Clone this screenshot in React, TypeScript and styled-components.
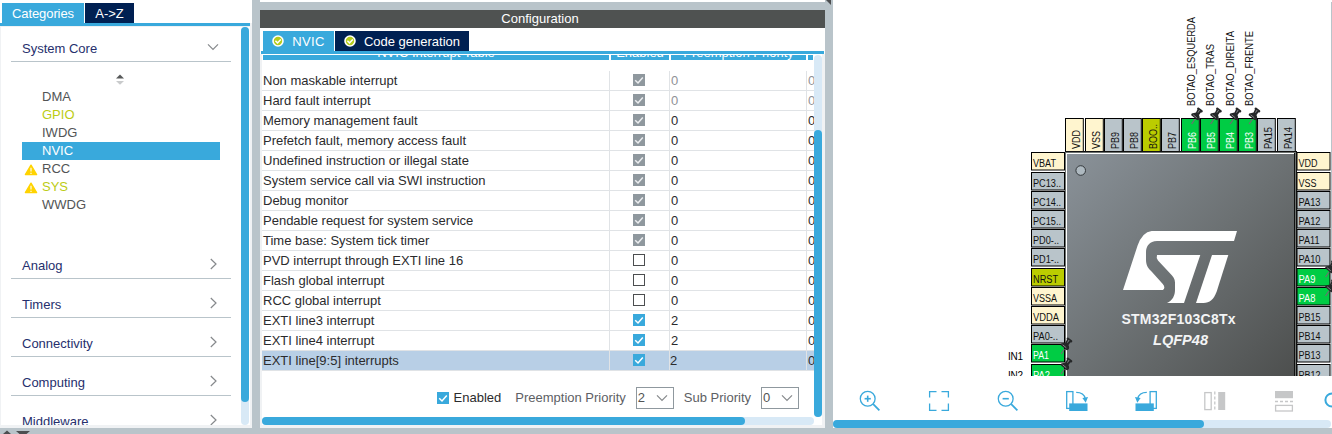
import React from 'react';
import styled, { createGlobalStyle } from 'styled-components';

const c = {
  blue: '#39a9dc',
  navy: '#002052',
  frame: '#b9c4ca',
  track: '#d8e9f6',
  edge: '#f0f2f4',
  lime: '#bbcc00',
  green: '#00cc44',
  cream: '#fff5cf',
  yellow: '#ffd300',
  line: '#e0e3e6',
};

const Global = createGlobalStyle`
  * { box-sizing: border-box; }
  html, body { margin: 0; padding: 0; }
  body { font-family: "Liberation Sans", Arial, sans-serif; font-size: 13px; overflow: hidden; }
  svg { display: block; flex: none; }
`;

const Page = styled.div`
  width: 1332px;
  height: 434px;
  display: flex;
  background: ${c.frame};
  overflow: hidden;
`;

const Text = styled.span<{ $ls?: number }>`
  letter-spacing: ${(p) => p.$ls ?? 0}px;
  white-space: pre;
`;

/* ---------- left: categories ---------- */

const LeftColumn = styled.div`
  width: 252px;
  height: 434px;
  display: flex;
  flex-direction: column;
  flex: none;
`;

const LeftPanel = styled.div`
  height: 428px;
  display: flex;
  flex-direction: column;
  background: ${c.edge};
  overflow: hidden;
`;

const LeftTabs = styled.div`
  height: 23px;
  padding: 3px 0 0 2px;
  display: flex;
  gap: 1px;
  background: #fff;
  flex: none;
`;

const Tab = styled.div<{ $active?: boolean; $w: number }>`
  width: ${(p) => p.$w}px;
  height: 20px;
  line-height: 19px;
  display: flex;
  align-items: center;
  justify-content: center;
  gap: 8px;
  color: #fff;
  background: ${(p) => (p.$active ? c.blue : c.navy)};
`;

const LeftRule = styled.div`
  height: 3px;
  width: 250px;
  background: ${c.blue};
  flex: none;
`;

const LeftBody = styled.div`
  height: 398px;
  margin: 1px 2px 0 1px;
  display: flex;
  background: #fff;
  overflow: hidden;
`;

const CategoryList = styled.div`
  width: 240px;
  padding: 0 10px;
  flex: none;
`;

const Category = styled.div<{ $h: number; $top: number }>`
  height: ${(p) => p.$h}px;
  padding: ${(p) => p.$top}px 12px 0 11px;
  display: flex;
  justify-content: space-between;
  border-bottom: 1px solid ${c.frame};
  color: #262f6d;
  line-height: 16px;
`;

const SortHandle = styled.div`
  height: 26px;
  padding: 12px 0 0 105px;
`;

const ItemList = styled.div`
  height: 152px;
`;

const Item = styled.div<{ $selected?: boolean; $on?: boolean }>`
  height: 18px;
  width: 198px;
  margin-left: 11px;
  display: flex;
  align-items: center;
  line-height: 18px;
  color: ${(p) => (p.$selected ? '#fff' : p.$on ? '#bccc14' : '#525455')};
  background: ${(p) => (p.$selected ? c.blue : 'transparent')};
`;

const ItemIcon = styled.span`
  width: 20px;
  padding: 1px 0 0 2px;
`;

const VTrack = styled.div`
  width: 8px;
  border-radius: 4px;
  background: ${c.track};
  flex: none;
`;

const VThumb = styled.div<{ $top?: number; $h: number }>`
  height: ${(p) => p.$h}px;
  margin-top: ${(p) => p.$top ?? 0}px;
  border-radius: 4px;
  background: ${c.blue};
`;

/* ---------- middle: configuration ---------- */

const MiddleColumn = styled.div`
  width: 565px;
  margin-left: 8px;
  display: flex;
  flex-direction: column;
  flex: none;
`;

const TopStrip = styled.div`
  height: 2px;
  margin-bottom: 8px;
  background: #fff;
`;

const ConfigTitle = styled.div`
  height: 18px;
  line-height: 18px;
  padding-right: 5px;
  text-align: center;
  color: #fff;
  background: #4f5251;
`;

const ConfigPanel = styled.div`
  height: 400px;
  display: flex;
  flex-direction: column;
  background: ${c.edge};
`;

const ConfigTabs = styled.div`
  height: 23px;
  padding: 3px 0 0 3px;
  display: flex;
  gap: 1px;
  background: #fff;
`;

const ConfigRule = styled.div`
  height: 3px;
  background: ${c.blue};
  border: solid #fff;
  border-width: 0 1px;
`;

const ConfigBody = styled.div`
  height: 371px;
  margin: 0 3px 3px 2px;
  display: flex;
  flex-direction: column;
  background: #fff;
`;

const ConfigMain = styled.div`
  height: 363px;
  padding-top: 1px;
  display: flex;
`;

const ConfigContent = styled.div`
  width: 552px;
  overflow: hidden;
`;

const columns = '348px 60px 137px 7px';

const HeadRow = styled.div`
  display: grid;
  grid-template-columns: ${columns};
  height: 5px;
  margin-bottom: 11px;
  overflow: hidden;
`;

const HeadCell = styled.div`
  margin: 0 1px;
  height: 5px;
  display: flex;
  align-items: flex-end;
  justify-content: center;
  overflow: hidden;
  color: #fff;
  line-height: 11px;
  background: ${c.blue};
`;

const HeadLabel = styled(Text)`
  margin-bottom: 2px;
  height: 11px;
`;

const Row = styled.div<{ $selected?: boolean }>`
  display: grid;
  grid-template-columns: ${columns};
  height: 20px;
  line-height: 19px;
  background: ${(p) => (p.$selected ? '#b8cfe6' : '#fff')};
`;

const Cell = styled.div<{ $muted?: boolean; $pad?: number }>`
  border-right: 1px solid ${c.line};
  border-bottom: 1px solid ${c.line};
  padding-left: ${(p) => p.$pad ?? 1}px;
  color: ${(p) => (p.$muted ? '#8f9297' : '#2b2b2d')};
  overflow: hidden;
  white-space: nowrap;
  &:last-child { border-right: 0; }
`;

const CheckCell = styled(Cell)`
  padding: 3px 0 0 23px;
`;

const Form = styled.div`
  height: 46px;
  padding: 7px 15px 0 0;
  display: flex;
  justify-content: flex-end;
  align-items: center;
  color: #5d6064;
`;

const EnabledField = styled.div`
  display: flex;
  align-items: center;
  gap: 5px;
  margin-right: 14px;
  color: #2b2b2d;
`;

const Select = styled.div`
  width: 38px;
  height: 22px;
  padding: 0 5px 0 1px;
  display: flex;
  align-items: center;
  justify-content: space-between;
  border: 1px solid #8f989e;
  color: #525455;
`;

const FieldLabel = styled(Text)`
  margin-right: 10px;
  ${Select} + & { margin-left: 10px; }
`;

const HTrack = styled.div<{ $w: number }>`
  width: ${(p) => p.$w}px;
  height: 8px;
  border-radius: 4px;
  background: ${c.track};
`;

const HThumb = styled.div<{ $w: number }>`
  width: ${(p) => p.$w}px;
  height: 8px;
  border-radius: 4px;
  background: ${c.blue};
`;

const Splitter = styled.div`
  width: 8px;
  flex: none;
`;

/* ---------- right: pinout ---------- */

const RightPanel = styled.div`
  width: 499px;
  height: 428px;
  display: flex;
  flex-direction: column;
  background: #fff;
  overflow: hidden;
  flex: none;
`;

const Canvas = styled.div`
  height: 376px;
  overflow: hidden;
`;

const Toolbar = styled.div`
  height: 44px;
  width: 499px;
  padding: 12px 0 0 2px;
  display: flex;
  overflow: hidden;
`;

const Tool = styled.div`
  width: 69.1px;
  flex: none;
  display: flex;
  justify-content: center;
`;

const SearchTool = styled.div`
  padding-left: 5px;
`;

/* ---------- icons ---------- */

const Chevron = ({ dir, color = '#86898c' }: { dir: 'down' | 'right'; color?: string }) => (
  <svg width="12" height="12" viewBox="0 0 12 12" fill="none" stroke={color} strokeWidth="1.2">
    {dir === 'down' ? <path d="M1 3.4 L6 8.4 L11 3.4" /> : <path d="M3.8 1 L9 6 L3.8 11" />}
  </svg>
);

const Warning = () => (
  <svg width="14" height="12" viewBox="0 0 14 12">
    <path d="M7 1.2 L12.6 10.6 H1.4 Z" fill={c.yellow} stroke={c.yellow} strokeWidth="1.4" strokeLinejoin="round" />
    <path d="M7 3.8 V7.6 M7 8.8 V10" stroke="#fff" strokeWidth="1.1" />
  </svg>
);

const SortArrows = () => (
  <svg width="8" height="11" viewBox="0 0 8 11">
    <path d="M0 4.4 L4 0.4 L8 4.4 Z" fill="#565859" />
    <path d="M0 7 L4 10.8 L8 7 Z" fill="#c9cbcc" />
  </svg>
);

const Approved = () => (
  <svg width="12" height="12" viewBox="0 0 12 12">
    <circle cx="6" cy="6" r="5" fill="#b5cb1c" stroke="#fff" strokeWidth="1.6" />
    <path d="M3.4 5.8 L5.5 7.9 L8.8 4.4" fill="none" stroke="#fff" strokeWidth="1.5" />
  </svg>
);

type CheckState = 'locked' | 'on' | 'off';

const Check = ({ state }: { state: CheckState }) => (
  <svg width="12" height="12" viewBox="0 0 12 12">
    {state === 'off' ? (
      <rect x="0.5" y="0.5" width="11" height="11" fill="#fff" stroke="#4c4e50" />
    ) : (
      <>
        <rect width="12" height="12" fill={state === 'on' ? c.blue : '#8f989e'} />
        <path d="M2.2 6.2 L5 9 L9.8 3.4" fill="none" stroke={state === 'on' ? '#fff' : '#eceef0'} strokeWidth="1.5" />
      </>
    )}
  </svg>
);

const Lens = ({ plus }: { plus?: boolean }) => (
  <svg width="24" height="24" viewBox="0 0 24 24" fill="none" stroke={c.blue} strokeWidth="1.3">
    <circle cx="9.7" cy="10.7" r="7.4" />
    <path d="M15.2 16.2 L21.4 22.4" strokeWidth="1.8" />
    <path d="M6.6 10.7 H12.8" strokeWidth="1.6" />
    {plus && <path d="M9.7 7.6 V13.8" strokeWidth="1.6" />}
  </svg>
);

const Fit = () => (
  <svg width="24" height="24" viewBox="0 0 24 24" fill="none" stroke={c.blue} strokeWidth="1.3">
    <path d="M2.6 9.5 V3.6 H9.5 M14.5 3.6 H21.4 V9.5 M21.4 15.5 V22.4 H14.5 M9.5 22.4 H2.6 V15.5" />
  </svg>
);

const Rotate = ({ left }: { left?: boolean }) => (
  <svg width="24" height="24" viewBox="0 0 24 24" fill="none" stroke={c.blue} strokeWidth="1.3">
    <g transform={left ? 'translate(24 0) scale(-1 1)' : undefined}>
      <rect x="1.7" y="3.6" width="6.2" height="16.8" />
      <rect x="4.2" y="15.4" width="18.3" height="7.6" fill={c.blue} stroke="none" />
      <path d="M11.2 4.4 C16 4.4 19.4 6.4 20.3 10.8" />
      <path d="M17.4 10 L23 9 L20.7 14.8 Z" fill={c.blue} stroke="none" />
    </g>
  </svg>
);

const Flip = ({ vertical }: { vertical?: boolean }) => (
  <svg width="24" height="24" viewBox="0 0 24 24" fill="none" stroke="#c6c7c8" strokeWidth="1.3">
    {vertical ? (
      <>
        <rect x="3" y="3" width="18" height="7.2" fill="#c6c7c8" stroke="none" />
        <path d="M3 13.5 H21" strokeDasharray="3 2" />
        <rect x="3.6" y="17.4" width="16.8" height="5.6" />
      </>
    ) : (
      <>
        <rect x="1.8" y="4.6" width="6.4" height="17" />
        <path d="M11.8 3.6 V22" strokeDasharray="3 2" />
        <rect x="15.2" y="4" width="7" height="18" fill="#c6c7c8" stroke="none" />
      </>
    )}
  </svg>
);

const Search = () => (
  <svg width="24" height="24" viewBox="0 0 24 24" fill="none" stroke={c.blue} strokeWidth="2">
    <circle cx="8" cy="12" r="6.6" />
  </svg>
);

/* ---------- chip drawing ---------- */

type Kind = 'power' | 'free' | 'boot' | 'used';
type Pin = [name: string, kind: Kind, length: number];

const fills: Record<Kind, string> = { power: c.cream, free: c.frame, boot: c.lime, used: c.green };

const topX = [232, 252, 271, 290, 309, 328, 348, 367, 386, 405, 424, 444];
const sideY = [152, 172, 191, 210, 229, 248, 268, 287, 306, 325, 344, 364];

const topPins: Pin[] = [
  ['VDD', 'power', 19], ['VSS', 'power', 18], ['PB9', 'free', 17], ['PB8', 'free', 17],
  ['BOO..', 'boot', 25], ['PB7', 'free', 17], ['PB6', 'used', 17], ['PB5', 'used', 17],
  ['PB4', 'used', 17], ['PB3', 'used', 17], ['PA15', 'free', 22], ['PA14', 'free', 22],
];
const leftPins: Pin[] = [
  ['VBAT', 'power', 23], ['PC13..', 'free', 28], ['PC14..', 'free', 28], ['PC15..', 'free', 28],
  ['PD0-..', 'free', 26], ['PD1-..', 'free', 26], ['NRST', 'boot', 25], ['VSSA', 'power', 24],
  ['VDDA', 'power', 26], ['PA0-..', 'free', 25], ['PA1', 'used', 16], ['PA2', 'used', 17],
];
const rightPins: Pin[] = [
  ['VDD', 'power', 19], ['VSS', 'power', 18], ['PA13', 'free', 22], ['PA12', 'free', 22],
  ['PA11', 'free', 21], ['PA10', 'free', 22], ['PA9', 'used', 17], ['PA8', 'used', 17],
  ['PB15', 'free', 22], ['PB14', 'free', 22], ['PB13', 'free', 22], ['PB12', 'free', 22],
];
const signals: [name: string, x: number, length: number][] = [
  ['BOTAO_ESQUERDA', 362, 89], ['BOTAO_TRAS', 381, 62], ['BOTAO_DIREITA', 401, 75], ['BOTAO_FRENTE', 420, 75],
];

const PinLabel = styled.text`
  font-family: "Liberation Sans", Arial, sans-serif;
  font-size: 10px;
`;

const ChipName = styled.text<{ $italic?: boolean }>`
  font-family: "Liberation Sans", Arial, sans-serif;
  font-size: 14px;
  font-weight: 700;
  font-style: ${(p) => (p.$italic ? 'italic' : 'normal')};
  fill: #f3f4f5;
`;

const SidePin = ({ x, y, pin: [name, kind, length] }: { x: number; y: number; pin: Pin }) => (
  <g>
    <rect x={x + 0.5} y={y + 0.5} width="33" height="17.5" fill={fills[kind]} stroke="#000" />
    <PinLabel x={x + 2} y={y + 15} textLength={length} lengthAdjust="spacingAndGlyphs" fill={kind === 'used' ? '#fff' : '#111'}>
      {name}
    </PinLabel>
  </g>
);

const TopPin = ({ x, pin: [name, kind, length] }: { x: number; pin: Pin }) => (
  <g>
    <rect x={x + 0.5} y="118.5" width="17.8" height="33" fill={fills[kind]} stroke="#000" />
    <PinLabel
      transform={`translate(${x + 14.5} 149) rotate(-90)`}
      textLength={length}
      lengthAdjust="spacingAndGlyphs"
      fill={kind === 'used' ? '#fff' : '#111'}
    >
      {name}
    </PinLabel>
  </g>
);

const Pushpin = ({ x, y }: { x: number; y: number }) => (
  <g transform={`translate(${x} ${y})`}>
    <path d="M4 12 L0.6 17" stroke="#6d6f70" strokeWidth="1.3" />
    <path d="M0.2 8.2 Q0 6 3 6 L5 5.4 L6.4 2.6 Q5.4 0.2 7.6 0.4 L11.6 3.4 Q12.4 5.4 9.8 5.6 L8 8 Q9.6 11.6 7.2 13 Q5.6 13.6 4.6 11.8 Z" fill="#252728" />
    <path d="M2.2 7.8 L5.8 10.8 M7 5.6 L8.6 3" stroke="#85888a" strokeWidth="1" />
  </g>
);

const Chip = () => (
  <svg width="499" height="376" viewBox="0 0 499 376">
    <defs>
      <linearGradient id="body" gradientUnits="userSpaceOnUse" x1="234" y1="154" x2="462" y2="382">
        <stop offset="0" stopColor="#8a9299" />
        <stop offset="0.5" stopColor="#6c7173" />
        <stop offset="1" stopColor="#4c4e4d" />
      </linearGradient>
    </defs>
    <path d="M498.5 2 V376" stroke={c.frame} />
    {leftPins.map((pin, i) => <SidePin key={pin[0]} x={198} y={sideY[i]} pin={pin} />)}
    {rightPins.map((pin, i) => <SidePin key={pin[0]} x={463.5} y={sideY[i]} pin={pin} />)}
    {topPins.map((pin, i) => <TopPin key={pin[0]} x={topX[i]} pin={pin} />)}
    {signals.map(([name, x, length]) => (
      <PinLabel key={name} transform={`translate(${x} 106) rotate(-90)`} textLength={length} lengthAdjust="spacingAndGlyphs" fill="#111">
        {name}
      </PinLabel>
    ))}
    <PinLabel x="175" y="360" textLength="15">IN1</PinLabel>
    <PinLabel x="175" y="379" textLength="15">IN2</PinLabel>

    <rect x="232" y="151" width="232" height="235" fill="#111" />
    <rect x="232" y="152" width="231" height="235" fill="#6d726f" />
    <rect x="233" y="153" width="230" height="235" fill="#fff" />
    <rect x="461" y="153" width="1" height="235" fill="#111" />
    <rect x="462" y="153" width="1" height="235" fill="#6d726f" />
    <rect x="463" y="152" width="1" height="235" fill="#111" />
    <rect x="234" y="154" width="227" height="235" fill="url(#body)" />
    <circle cx="247.7" cy="170.5" r="4.8" fill="#aeb9c0" stroke="#33383b" />

    <g transform="translate(-833 0)" fill="#fff">
      <path d="M1123 290 L1137.6 245.5 Q1142.4 232 1151.6 231 H1237 L1234 241 H1157 C1149.5 241 1146 246.5 1146 252 V260 C1146 266 1149 269 1152 272 L1162.8 284 Q1165.8 287.6 1163 290 Z" />
      <path d="M1157 255 H1200.3 L1184 303 H1167 C1172.5 300.5 1175 295.5 1175 290 V282.5 C1175 279 1173 276.5 1170.4 273.8 L1158 260.4 Q1156 257.6 1157 255 Z" />
      <path d="M1212 255 H1228.3 L1216.7 291.5 C1213.8 299.5 1209.5 303 1203.5 303 H1196 Z" />
    </g>
    <ChipName x="288.5" y="324" textLength="114">STM32F103C8Tx</ChipName>
    <ChipName $italic x="320" y="345" textLength="55" lengthAdjust="spacingAndGlyphs">LQFP48</ChipName>

    <Pushpin x={358} y={107} />
    <Pushpin x={377} y={107} />
    <Pushpin x={396.5} y={107} />
    <Pushpin x={415.5} y={107} />
    <Pushpin x={227.5} y={337} />
    <Pushpin x={227.5} y={357} />
    <Pushpin x={492} y={260} />
    <Pushpin x={492} y={279} />
  </svg>
);

/* ---------- data ---------- */

const items: { name: string; on?: boolean; selected?: boolean; warn?: boolean }[] = [
  { name: 'DMA' },
  { name: 'GPIO', on: true },
  { name: 'IWDG' },
  { name: 'NVIC', selected: true },
  { name: 'RCC', warn: true },
  { name: 'SYS', on: true, warn: true },
  { name: 'WWDG' },
];

const rows: [name: string, state: CheckState, priority: string, muted?: boolean][] = [
  ['Non maskable interrupt', 'locked', '0', true],
  ['Hard fault interrupt', 'locked', '0', true],
  ['Memory management fault', 'locked', '0'],
  ['Prefetch fault, memory access fault', 'locked', '0'],
  ['Undefined instruction or illegal state', 'locked', '0'],
  ['System service call via SWI instruction', 'locked', '0'],
  ['Debug monitor', 'locked', '0'],
  ['Pendable request for system service', 'locked', '0'],
  ['Time base: System tick timer', 'locked', '0'],
  ['PVD interrupt through EXTI line 16', 'off', '0'],
  ['Flash global interrupt', 'off', '0'],
  ['RCC global interrupt', 'off', '0'],
  ['EXTI line3 interrupt', 'on', '2'],
  ['EXTI line4 interrupt', 'on', '2'],
  ['EXTI line[9:5] interrupts', 'on', '2'],
];

export default function App() {
  return (
    <>
      <Global />
      <Page>
        <LeftColumn>
          <LeftPanel>
            <LeftTabs>
              <Tab $active $w={82}><Text $ls={-0.1}>Categories</Text></Tab>
              <Tab $w={49}><Text>{'A->Z'}</Text></Tab>
            </LeftTabs>
            <LeftRule />
            <LeftBody>
              <CategoryList>
                <Category $h={35} $top={14}>
                  <Text>System Core</Text>
                  <Chevron dir="down" />
                </Category>
                <SortHandle><SortArrows /></SortHandle>
                <ItemList>
                  {items.map((it) => (
                    <Item key={it.name} $selected={it.selected} $on={it.on}>
                      <ItemIcon>{it.warn && <Warning />}</ItemIcon>
                      <Text>{it.name}</Text>
                    </Item>
                  ))}
                </ItemList>
                {['Analog', 'Timers', 'Connectivity', 'Computing', 'Middleware'].map((name, i) => (
                  <Category key={name} $h={39} $top={18}>
                    <Text>{name}</Text>
                    <Chevron dir="right" />
                  </Category>
                ))}
              </CategoryList>
              <VTrack><VThumb $h={375} /></VTrack>
            </LeftBody>
          </LeftPanel>
          <svg width="40" height="6" viewBox="0 0 40 6" fill="#4c4e50">
            <path d="M3 6 L7 2.6 L11 6 Z M16 3 H30 L26.5 6 H19.5 Z" />
          </svg>
        </LeftColumn>

        <MiddleColumn>
          <TopStrip />
          <ConfigTitle>Configuration</ConfigTitle>
          <ConfigPanel>
            <ConfigTabs>
              <Tab $active $w={71}><Approved /><Text $ls={0.3}>NVIC</Text></Tab>
              <Tab $w={134}><Approved /><Text>Code generation</Text></Tab>
            </ConfigTabs>
            <ConfigRule />
            <ConfigBody>
              <ConfigMain>
                <ConfigContent>
                  <HeadRow>
                    <HeadCell><HeadLabel>NVIC Interrupt Table</HeadLabel></HeadCell>
                    <HeadCell><HeadLabel>Enabled</HeadLabel></HeadCell>
                    <HeadCell><HeadLabel>Preemption Priority</HeadLabel></HeadCell>
                    <HeadCell />
                  </HeadRow>
                  {rows.map(([name, state, priority, muted], i) => {
                    const selected = i === rows.length - 1;
                    return (
                      <Row key={name} $selected={selected}>
                        <Cell><Text>{name}</Text></Cell>
                        <CheckCell><Check state={state} /></CheckCell>
                        <Cell $muted={muted} $pad={selected ? 0 : 1}>{priority}</Cell>
                        <Cell $muted={muted}>0</Cell>
                      </Row>
                    );
                  })}
                  <Form>
                    <EnabledField><Check state="on" /><Text>Enabled</Text></EnabledField>
                    <FieldLabel>Preemption Priority</FieldLabel>
                    <Select>2<Chevron dir="down" /></Select>
                    <FieldLabel>Sub Priority</FieldLabel>
                    <Select>0<Chevron dir="down" /></Select>
                  </Form>
                </ConfigContent>
                <VTrack><VThumb $top={75} $h={287} /></VTrack>
              </ConfigMain>
              <HTrack $w={552}><HThumb $w={483} /></HTrack>
            </ConfigBody>
          </ConfigPanel>
        </MiddleColumn>

        <Splitter>
          <svg width="8" height="5" viewBox="0 0 8 5"><path d="M1 0 H6 V5 Z" fill="#4c4e50" /></svg>
        </Splitter>

        <RightPanel>
          <Canvas><Chip /></Canvas>
          <Toolbar>
            <Tool><Lens plus /></Tool>
            <Tool><Fit /></Tool>
            <Tool><Lens /></Tool>
            <Tool><Rotate /></Tool>
            <Tool><Rotate left /></Tool>
            <Tool><Flip /></Tool>
            <Tool><Flip vertical /></Tool>
            <SearchTool><Search /></SearchTool>
          </Toolbar>
          <HTrack $w={498}><HThumb $w={371} /></HTrack>
        </RightPanel>
      </Page>
    </>
  );
}
